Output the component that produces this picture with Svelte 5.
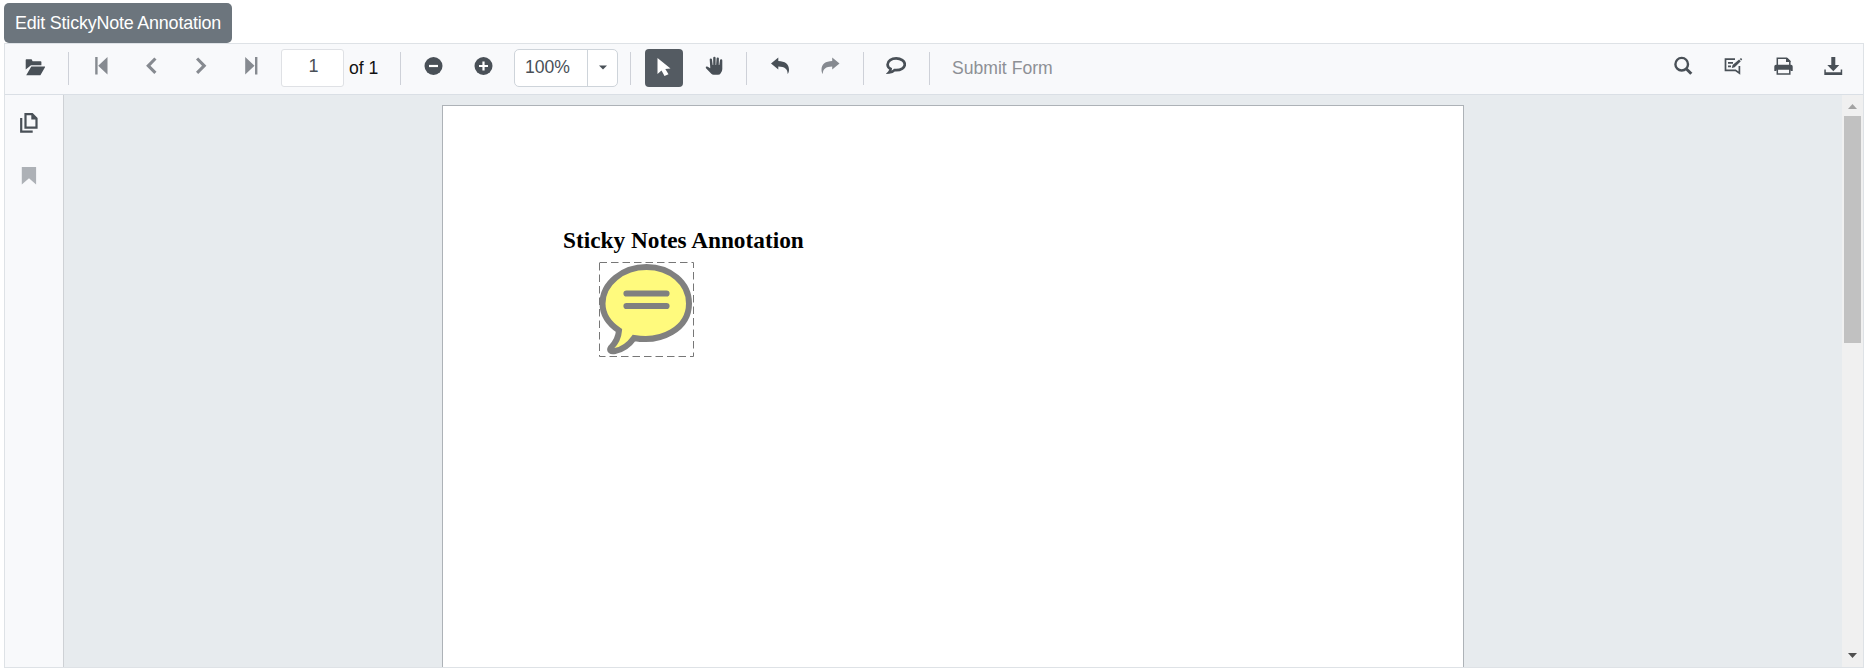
<script>
  const pages = $state({ current: 1, total: 1 });
  const shapes = {
    open: 'M.7 12.500V3q0-.7.7-.7h5.200l1 1.900h8q.8 0 .8.8v3.300H6zM6.300 9.500h14.200L15.700 17.700q-.3.500-.8.500H1.200z',
    first: 'M4.200 1h2.400v17.500H4.200zM16.500 1v17.500L7.200 9.700z',
    prev: 'M13.300 1.500l2.200 2.100-6 6.100 6 6.100-2.200 2.100-8.200-8.200z',
    next: 'M7.200 1.500L5 3.600l6 6.100-6 6.100 2.200 2.100 8.200-8.200z',
    last: 'M14 1h2.400v17.500H14zM4.200 1v17.500l9.300-8.800z',
    undo: 'M0 6.500L7.300.6v3.500c6.700.1 10.700 3.200 10.700 8.700 0 1.900-.5 3.400-1.400 4.200.3-4.800-3-7.300-9.300-7.400V12.600z',
    redo: 'M18.500 6.500L11.200.6v3.500C4.500 4.200.5 7.300.5 12.800c0 1.900.5 3.400 1.400 4.200-.3-4.800 3-7.300 9.300-7.400V12.600z',
    select: 'M1.500 0l13 10.400-5.200.7 3.200 5.100-4 1.800-3-5.400-4 3.500z'
  };
</script>

{#snippet glyph(name)}
  <svg width="20" height="20" viewBox="0 0 20 20"><path d={shapes[name]} /></svg>
{/snippet}

<main>
  <button class="edit">Edit StickyNote Annotation</button>
  <section class="viewer">
    <header>
      <span class="tool open">{@render glyph('open')}</span>
      <i class="sep"></i>
      <span class="tool off">{@render glyph('first')}</span>
      <span class="tool off">{@render glyph('prev')}</span>
      <span class="tool off">{@render glyph('next')}</span>
      <span class="tool off">{@render glyph('last')}</span>
      <span class="page-number">{pages.current}</span>
      <span class="total">of {pages.total}</span>
      <i class="sep"></i>
      <span class="tool"><svg width="20" height="20" viewBox="0 0 20 20"><circle cx="10.500" cy="10" r="9" /><path class="cut" d="M6 8.900h9v2.200H6z" /></svg></span>
      <span class="tool"><svg width="20" height="20" viewBox="0 0 20 20"><circle cx="10.500" cy="10" r="9" /><path class="cut" d="M6 8.900h3.400V5.500h2.200v3.400H15v2.200h-3.400v3.400H9.400v-3.400H6z" /></svg></span>
      <span class="zoom"><span>100%</span><b><svg width="10" height="6" viewBox="0 0 10 6"><path d="M1 .5h8l-4 4z" /></svg></b></span>
      <i class="sep wide"></i>
      <span class="tool chosen"><b>{@render glyph('select')}</b></span>
      <span class="tool"><svg width="20" height="20" viewBox="0 0 20 20"><path d="M6.200 11L5.700 3.400q0-1 1.100-1t1.200 1L8.700 9h.5V1.900q0-1.100 1.200-1.100t1.200 1.100V9h.5l.5-6.600q.1-1.100 1.200-1 1.100 0 1.100 1.100L14.800 9h.5l.7-4.800q.1-1.100 1.200-1 1.100.1 1.100 1.200v8.700q0 2.700-1.600 4.200-.9 1.500-2.700 1.500H9.700q-1.500 0-2.400-1L2 12.200q-.8-1.300.5-1.600 1.100-.2 2.100.6l1.600 1.100z" /></svg></span>
      <i class="sep near"></i>
      <span class="tool history">{@render glyph('undo')}</span>
      <span class="tool history off">{@render glyph('redo')}</span>
      <i class="sep"></i>
      <span class="tool"><svg width="20" height="20" viewBox="0 0 20 20"><path class="line" stroke-width="2.700" d="M10.200 2.400c-4.700 0-8.600 2.600-8.600 6 0 1.900 1.100 3.500 3 4.500-.1 1.700-.6 2.700-1.500 3.600 2.300-.2 4-1 5.400-2.400l1.700.1c4.700 0 8.600-2.500 8.600-5.800s-3.900-6-8.600-6z" /></svg></span>
      <i class="sep"></i>
      <span class="submit">Submit Form</span>
      <div class="right">
        <span class="tool"><svg width="20" height="20" viewBox="0 0 20 20"><circle class="line" stroke-width="2.400" cx="8.700" cy="8.200" r="6.300" /><path class="line" stroke-width="3" d="M13.200 12.700l5.100 5.100" /></svg></span>
        <span class="tool"><svg width="20" height="20" viewBox="0 0 20 20"><path class="line" stroke-width="1.700" d="M12 3.200H2.500v11.200h10l3.900 2.800V10M5 6.800h5M5 10.300h3" /><path d="M8.800 12.100l.8-3 6.500-5.600 1.700 1.800-6.100 5.900zM16.800 2.900l1.200-1 1.200 1.300-1 1.200z" /></svg></span>
        <span class="tool"><svg width="20" height="20" viewBox="0 0 20 20"><path class="line" stroke-width="1.500" d="M4.300 9V2.300h9.400l3.100 3V9M4.300 13v5h12.500v-5" /><path d="M13 2h1.500L17.500 5v1H13zM1.300 10.500q0-1.700 1.700-1.700h15q1.700 0 1.700 1.700v4.400h-2.200v-1.200H3.500v1.200H1.300z" /></svg></span>
        <span class="tool"><svg width="20" height="20" viewBox="0 0 20 20"><path d="M8.300 1h4v8h4l-6 6.200L4.300 9h4zM1.300 13.500h1.500v2.700h14.900v-2.700h1.500V19H1.300z" /></svg></span>
      </div>
    </header>
    <div class="body">
      <aside>
        <svg width="20" height="22" viewBox="0 0 20 22"><path class="line" stroke-width="2.200" d="M5.500 2.200h6.700l4.300 4.300v9.200h-11zM1.200 6v13.600h11.500" /><path d="M11.300 2l5.500 5.500h-5.500z" /></svg>
        <svg class="bookmark" width="16" height="18" viewBox="0 0 16 18"><path d="M.8 0h14.300v17.500l-7.100-6.200-7.200 6.200z" /></svg>
      </aside>
      <div class="canvas">
        <article>
          <h1>Sticky Notes Annotation</h1>
          <svg class="note" width="96" height="96" viewBox="0 0 96 96">
            <path fill="#fffa7d" stroke="#808080" stroke-width="6" d="M47.500 5C24 5 3.500 21 3.500 41.500c0 11 6 20 16.500 27-.5 7-3 12-8 17-2 3 0 4.500 4 3.500 8-1.500 14-6 19-13 27 5 55-9 55-34.500C90 21 71.500 5 47.500 5z" />
            <path fill="none" stroke="#808080" stroke-width="6.200" stroke-linecap="round" d="M27.500 31.500h40M27.500 44h40" />
            <path fill="none" stroke="#777" stroke-dasharray="7.500 4" d="M.5.500h94v94H.5z" />
          </svg>
        </article>
      </div>
      <div class="scrollbar">
        <svg width="21" height="21" viewBox="0 0 21 21"><path fill="#a3a3a3" d="M6 14l4.500-5L15 14z" /></svg>
        <div class="thumb"></div>
        <svg class="down" width="21" height="21" viewBox="0 0 21 21"><path fill="#505050" d="M6 7l4.500 5L15 7z" /></svg>
      </div>
    </div>
  </section>
</main>

<style>
  :global(body) { background: #fff; }
  main { height: 670px; padding: 3px 2px 2px 4px; box-sizing: border-box; overflow: hidden; font-family: "Liberation Sans", Arial, sans-serif; color: #495057; }
  .edit { display: block; width: 228px; height: 40px; border: 0; border-radius: 5px; padding: 0 0 1px; background: #6c757d; color: #fff; font: 17.9px/38px "Liberation Sans", Arial, sans-serif; letter-spacing: -.18px; white-space: nowrap; }
  .viewer { height: 625px; box-sizing: border-box; border: 1px solid #dee2e6; display: flex; flex-direction: column; }
  header { height: 50px; border-bottom: 1px solid #dadfe5; display: flex; align-items: flex-start; flex: none; background: #f8f9fb; }
  svg { display: block; fill: currentColor; flex: none; }
  .tool { width: 50px; height: 44px; flex: none; display: flex; align-items: center; justify-content: center; }
  .open { margin-left: 5px; }
  .open svg { transform: translateY(1px); }
  .off { color: #868a90; }
  .history svg { transform: translate(1px, 1px); }
  .sep { width: 1px; height: 33px; margin: 8px 7px 0 8px; background: #ced1d8; flex: none; }
  .wide { margin: 8px 8px 0 12px; }
  .near { margin: 8px 8px 0 7px; }
  .page-number { width: 63px; height: 38px; box-sizing: border-box; margin: 5px 5px 0; padding-left: 2px; border: 1px solid #dfe1e5; border-radius: 3px; background: #fff; font-size: 18px; line-height: 33px; text-align: center; }
  .total { width: 43px; padding-top: 14px; color: #111; font-size: 17.600px; line-height: 20px; white-space: nowrap; }
  .zoom { display: flex; width: 104px; height: 38px; margin: 5px 0 0 6px; box-sizing: border-box; border: 1px solid #ced4da; border-radius: 5px; background: #fff; font-size: 17.600px; line-height: 34px; }
  .zoom span { width: 72px; box-sizing: border-box; padding-left: 10px; }
  .zoom b { border-left: 1px solid #ced4da; flex: 1; display: flex; align-items: center; justify-content: center; }
  .chosen b { width: 38px; height: 38px; border-radius: 4px; background: #545b62; color: #fff; display: flex; align-items: center; justify-content: center; }
  .chosen { height: 48px; }
  .chosen svg { transform: translate(2px, 0); }
  .cut { fill: #fff; }
  .line { fill: none; stroke: currentColor; }
  .submit { margin-left: 15px; padding-top: 14px; color: #8d9095; font-size: 17.600px; line-height: 20px; white-space: nowrap; }
  .right { display: flex; margin: 0 5px 0 auto; }
  .body { flex: 1; min-height: 0; display: flex; }
  aside { width: 59px; box-sizing: border-box; border-right: 1px solid #ced1d5; background: #f8f9fb; padding: 17px 0 0 15px; }
  .bookmark { margin: 33px 0 0 1px; color: #adb1b6; }
  .canvas { flex: 1; background: #e7ebee; overflow: hidden; padding: 10px 0 0 378px; }
  article { width: 1022px; height: 570px; box-sizing: border-box; background: #fff; border: 1px solid #adb2b7; padding: 120px 0 0 120px; }
  h1 { margin: 0; color: #000; font: bold 23.300px/28px "Liberation Serif", serif; white-space: nowrap; }
  .note { margin: 8px 0 0 36px; }
  .scrollbar { width: 21px; background: #f0f0f0; display: flex; flex-direction: column; align-items: center; }
  .thumb { width: 17px; height: 227px; background: #c1c1c1; flex: none; }
  .down { margin-top: auto; }
</style>
